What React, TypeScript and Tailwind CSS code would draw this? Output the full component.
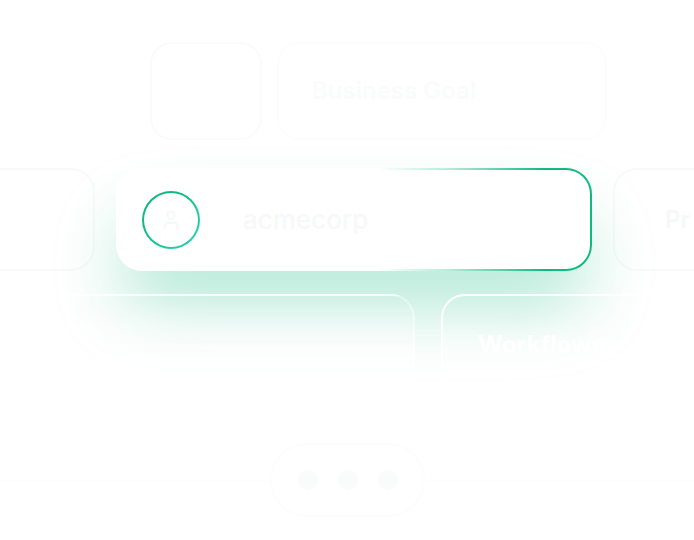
import { User } from "lucide-react";

const font = { fontFamily: "Inter, 'Noto Sans', sans-serif" };

export default function App() {
    return (
        <div className="relative h-[540px] w-[694px] overflow-hidden bg-white" style={font}>
            <div className="flex flex-col pt-[42px]">
                {/* row 1 */}
                <div className="flex h-[98px] gap-[15px] pl-[150px]">
                    <div className="w-[112px] shrink-0 rounded-[22px] border-2 border-[#fafbfb]" />
                    <div className="flex w-[330px] shrink-0 items-center rounded-[22px] border-2 border-[#fcfdfd] pl-[33px]">
                        <span className="text-[24px] font-semibold text-[#fafbfb]">Business Goal</span>
                    </div>
                </div>

                {/* row 2 */}
                <div className="mt-[28px] flex h-[103px] gap-[21px] -ml-[105px]">
                    <div className="w-[200px] shrink-0 rounded-[24px] border-2 border-[#f8faf9] bg-white" />
                    <div className="relative z-10 w-[476px] shrink-0 rounded-[26px] bg-[linear-gradient(90deg,rgba(16,185,129,0)_55%,rgba(16,185,129,0.3)_70%,#10b981_90%)] p-[2px] shadow-[0_44px_70px_-8px_rgba(16,185,129,0.32)]">
                        <div className="flex h-full items-center rounded-[24px] bg-white pl-[24px]">
                            <div className="rounded-full bg-[linear-gradient(135deg,#10b981_30%,#2dd4bf)] p-[2px]">
                                <div className="flex h-[54px] w-[54px] items-center justify-center rounded-full bg-white">
                                    <User size={22} className="text-[#f7f9f8]" strokeWidth={2.5} />
                                </div>
                            </div>
                            <span className="ml-[43px] text-[26px] font-medium text-[#f7f9f8]">acmecorp</span>
                        </div>
                    </div>
                    <div className="flex w-[200px] shrink-0 items-center rounded-[24px] border-2 border-[#f8faf9] bg-white/60 pl-[50px]">
                        <span className="text-[24px] font-semibold text-[#f6f8f7]">Pr</span>
                    </div>
                </div>

                {/* row 3 */}
                <div className="relative z-20 mt-[23px] flex h-[101px] gap-[26px] pl-[40px]">
                    <div className="w-[375px] shrink-0 rounded-[24px] border-2 border-white/40 bg-[linear-gradient(180deg,rgba(255,255,255,0)_0%,rgba(255,255,255,0.8)_100%)]" />
                    <div className="flex w-[300px] shrink-0 items-center rounded-[24px] border-2 border-white bg-[linear-gradient(180deg,rgba(255,255,255,0)_20%,rgba(255,255,255,0.6)_100%)] pl-[35px]">
                        <span className="text-[24px] font-bold text-white">Workflows</span>
                    </div>
                </div>

                {/* pager */}
                <div className="mt-[48px] flex items-center">
                    <div className="h-px w-[270px] bg-[#fdfdfd]" />
                    <div className="flex h-[74px] w-[155px] shrink-0 items-center justify-center gap-[20px] rounded-full border-2 border-[#fcfdfd]">
                        <span className="h-[20px] w-[20px] rounded-full bg-[#fafbfb]" />
                        <span className="h-[20px] w-[20px] rounded-full bg-[#fafbfb]" />
                        <span className="h-[20px] w-[20px] rounded-full bg-[#fafbfb]" />
                    </div>
                    <div className="h-px flex-1 bg-[#fdfdfd]" />
                </div>
            </div>
        </div>
    );
}
